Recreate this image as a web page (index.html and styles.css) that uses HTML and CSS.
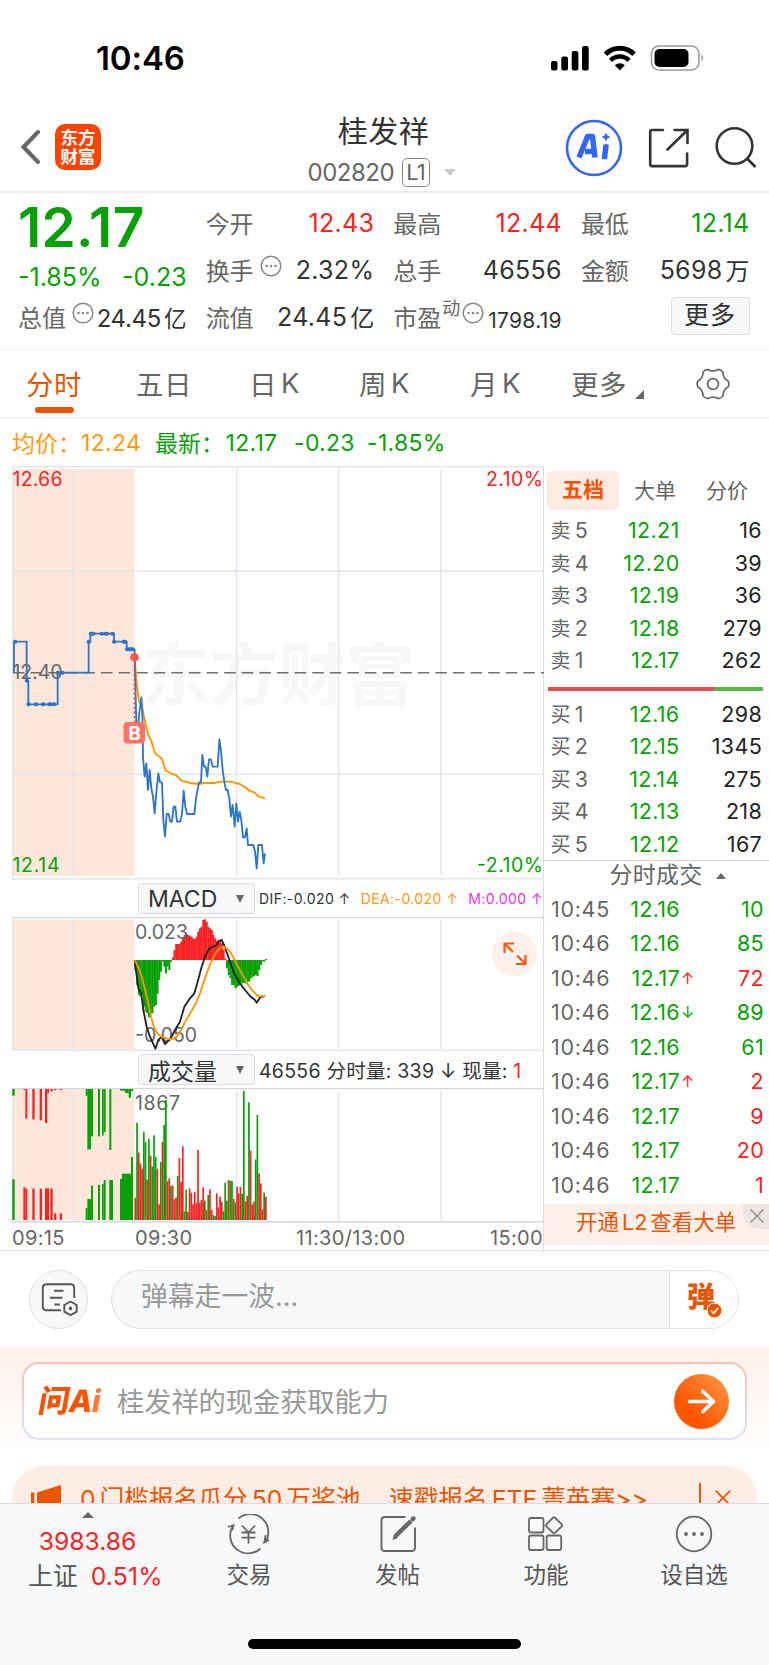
FILE: index.html
```html
<!DOCTYPE html>
<html lang="zh-CN">
<head>
<meta charset="utf-8">
<title>桂发祥 002820</title>
<link rel="stylesheet" href="styles.css">
</head>
<body>
<div class="screen">
  <div class="status">
    <span class="clock">10:46</span>
    <svg class="status-icons" width="156" height="28" viewBox="550 43 156 28">
      <rect x="551" y="60" width="6.5" height="9.5" rx="2"/><rect x="561.300" y="55.500" width="6.700" height="14" rx="2"/><rect x="571.700" y="50" width="6.700" height="19.500" rx="2"/><rect x="582" y="45" width="6.700" height="24.500" rx="2"/>
      <path d="M605.500 53.200a20 20 0 0 1 28.500 0" fill="none" stroke="#000" stroke-width="5"/>
      <path d="M610.500 59.400a13 13 0 0 1 18.500 0" fill="none" stroke="#000" stroke-width="4.500"/>
      <path d="M614.800 64.200a7.500 7.500 0 0 1 10 0l-5 5.200z"/>
      <rect x="651.500" y="45" width="47.500" height="24" rx="7.500" fill="none" stroke="#999" stroke-width="1.500"/>
      <rect x="654.500" y="48" width="34" height="18" rx="5"/><path d="M701.500 53.500a4.500 4.500 0 0 1 0 7z" fill="#999"/>
    </svg>
  </div>

  <header class="header">
    <div class="head-left">
      <svg width="20" height="36" viewBox="0 0 20 36"><path d="M18 3 3.500 18 18 33" fill="none" stroke="#666" stroke-width="4" stroke-linecap="round" stroke-linejoin="miter"/></svg>
      <div class="logo"><span>东方</span><span>财富</span></div>
    </div>
    <div class="head-title">
      <h1>桂发祥</h1>
      <div class="code"><span>002820</span><b>L1</b><i></i></div>
    </div>
    <svg class="head-icons" width="205" height="60" viewBox="564 118 205 60" fill="none" stroke="#333" stroke-width="2.600">
      <circle cx="594" cy="148" r="27" stroke="#36f" stroke-width="2.600"/>
      <path d="M579 157.500l8.500-21h5l2.500 21M585 151.500h8" stroke="#36f" stroke-width="5.500" stroke-linejoin="round"/>
      <path d="M604.500 145.500h3l-1.500 12.500h-3z" fill="#36f" stroke="#36f" stroke-width="2.500" stroke-linejoin="round"/>
      <path d="M606 133.500l1.200 2.300 2.300 1.200-2.300 1.200-1.200 2.300-1.200-2.300-2.300-1.200 2.300-1.200z" fill="#36f" stroke="#36f" stroke-width="1"/>
      <path d="M663 130h-11q-1.800 0-1.800 1.800v32.500q0 1.800 1.800 1.800h33.300q1.800 0 1.800-1.800V153.500M674.500 130h13v13M687 130.500L667.500 149.500" stroke-linecap="round"/>
      <circle cx="734.500" cy="146" r="17.800"/><path d="M747.500 159l8 8"/>
    </svg>
  </header>

  <section class="quote">
    <div class="qcol first">
      <div class="price">12.17</div>
      <div class="change"><span>-1.85%</span><span>-0.23</span></div>
      <div class="cell low"><label>总值</label><svg class="dots" viewBox="0 0 22 22"><use href="#more-dots"/></svg><span class="v sm">24.45<u>亿</u></span></div>
    </div>
    <div class="qcol">
      <div class="cell"><label>今开</label><span class="v red">12.43</span></div>
      <div class="cell"><label>换手</label><svg class="dots" viewBox="0 0 22 22"><use href="#more-dots"/></svg><span class="v">2.32%</span></div>
      <div class="cell"><label>流值</label><span class="v">24.45<u>亿</u></span></div>
    </div>
    <div class="qcol">
      <div class="cell"><label>最高</label><span class="v red">12.44</span></div>
      <div class="cell"><label>总手</label><span class="v">46556</span></div>
      <div class="cell"><label>市盈</label><sup>动</sup><svg class="dots tight" viewBox="0 0 22 22"><use href="#more-dots"/></svg><span class="v xs">1798.19</span></div>
    </div>
    <div class="qcol">
      <div class="cell"><label>最低</label><span class="v green">12.14</span></div>
      <div class="cell"><label>金额</label><span class="v">5698<u>万</u></span></div>
      <div class="cell"><button class="more">更多</button></div>
    </div>
  </section>

  <nav class="tabs">
    <span class="tab on">分时</span><span class="tab">五日</span><span class="tab">日<u>K</u></span><span class="tab">周<u>K</u></span><span class="tab">月<u>K</u></span><span class="tab">更多<i></i></span>
    <span class="tab gear"><svg width="34" height="34" viewBox="-17 -17 34 34" fill="none" stroke="#666" stroke-width="1.700"><path d="M15.260 2.690Q9.960 5.750 9.960 11.870Q8.250 14.300 5.300 14.570Q0 11.500-5.300 14.570Q-8.250 14.300-9.960 11.870Q-9.960 5.750-15.260 2.690Q-16.500 0-15.260-2.690Q-9.960-5.750-9.960-11.870Q-8.250-14.300-5.300-14.570Q0-11.500 5.300-14.570Q8.250-14.300 9.960-11.870Q9.960-5.750 15.260-2.690Q16.500 0 15.260 2.690Z"/><circle r="5.400"/></svg></span>
  </nav>

  <div class="summary">
    <span class="orange a">均价：</span><span class="orange b">12.24</span><span class="green c">最新：</span><span class="green d">12.17</span><span class="green e">-0.23</span><span class="green f">-1.85%</span>
  </div>

  <main class="market">
    <div class="charts">
      <svg class="chart" width="532" height="414" viewBox="12 466 532 414">
        <rect x="12.500" y="469" width="122" height="407" fill="#fde7db"/>
        <text class="watermark" x="142" y="700" textLength="272">东方财富</text>
        <g stroke="#e2e6ed" stroke-width="1.500" fill="none">
          <path d="M12 466.700H544M12.700 466V880M12 571H544M12 774.300H544M12 878.700H544"/>
          <path d="M73 469V876M236.600 469V876M338.700 469V876M441 469V876"/>
        </g>
        <path d="M12 672.700H544" stroke="#707070" stroke-width="1.600" stroke-dasharray="11.500 6.100" stroke-dashoffset="-1"/>
        <text class="lab red" x="12.500" y="486" textLength="50">12.66</text>
        <text class="lab red end" x="543" y="486" textLength="57">2.10%</text>
        <text class="lab green" x="12.500" y="872" textLength="47">12.14</text>
        <text class="lab green end" x="543" y="872" textLength="66">-2.10%</text>
        <text class="lab gray" x="12.500" y="679" textLength="50">12.40</text>
        <g transform="translate(0 460) scale(.33333)" fill="none" stroke-width="5.500" stroke-linejoin="round">
          <path stroke="#ff9500" d="M404 590L410 670 417 725 425 735 434 780 445 825 455 845 465 880 475 887 486 897 496 930 512 940 527 945 545 962 570 969 597 972 612 969 640 969 665 965 690 965 720 972 735 982 748 992 765 998 775 1010 795 1014"/>
          <path stroke="#2e75c5" d="M42 638V545H80V662H85V733H173V638H266V545H271V521H342V545H380V568H404V590L409 790 414 800 419 750 424 712 427 760 429 890 434 950 439 910 444 990 449 930 454 985 459 1010 464 1060 470 985 475 940 480 967 486 967 490 1080 495 1130 500 1062 506 1062 511 1085 516 1085 521 1040 526 1040 531 1085 541 1085 546 1062 551 992 556 1040 561 1062 583 1062 588 1015 597 967 603 967 607 885 612 920 617 920 622 950 627 898 633 898 638 920 653 920 658 838 663 875 668 930 673 965 678 990 683 990 688 1015 693 1070 698 1035 704 1100 709 1030 714 1085 719 1055 724 1080 729 1132 735 1132 740 1105 744 1155 760 1155 765 1175 770 1225 775 1155 786 1155 791 1210 795 1180"/>
          <path stroke="#2e75c5" stroke-width="12" stroke-linecap="round" d="M45 545h1M80 662h1M85 733h1M107 733h1M129 733h1M147 733h5M162 733h1M173 638h1M187 638h1M266 545h1M272 521h9M305 521h1M317 521h4M337 521h1M342 545h1M371 545h5M381 568h17"/>
          <path stroke="#f24a3d" stroke-dasharray="7 7" d="M404 600V790"/>
        </g>
        <circle cx="134.500" cy="657.300" r="4.300" fill="#f4574a"/>
        <rect x="123.500" y="722" width="21.500" height="21.500" rx="4" fill="#fd7465"/>
        <text class="flag" x="134.500" y="740">B</text>
      </svg>

      <div class="indicator">
        <button class="select">MACD<i></i></button>
        <span class="macd-values"><span>DIF:-0.020 ↑</span><span class="orange">DEA:-0.020 ↑</span><span class="magenta">M:0.000 ↑</span></span>
      </div>

      <svg class="chart" width="532" height="134" viewBox="12 917 532 134">
        <rect x="12.500" y="919.500" width="122" height="129.500" fill="#fde7db"/>
        <g stroke="#e2e6ed" stroke-width="1.500"><path d="M12.700 917V1050M73 919.500V1049M236.600 919.500V1049M338.700 919.500V1049M441 919.500V1049M12 1050.300H544"/><path stroke="#d5d8e0" d="M12 917.600H544"/></g>
        <g id="histogram" transform="translate(0 870) scale(.33333)"></g>
        <text class="lab gray" x="135" y="939" textLength="53">0.023</text>
        <text class="lab gray" x="135" y="1042" textLength="62">-0.050</text>
        <g transform="translate(0 870) scale(.33333)" fill="none" stroke-width="5.500" stroke-linejoin="round">
          <path stroke="#222" d="M404 272L409 310 415 355 424 370 430 420 440 470 450 500 466 536 475 510 485 500 495 522 512 505 525 480 540 455 553 410 570 385 583 370 593 335 605 290 615 260 628 235 650 225 657 212 665 210 672 225 685 260 695 290 705 315 720 340 735 360 750 378 765 390 770 398 780 383 795 378"/>
          <path stroke="#ff9500" d="M404 272C420 290 435 355 445 400S460 490 485 500 500 507 515 507 535 492 545 478C560 440 585 415 600 370S625 290 640 262 665 225 680 235 700 265 725 310 755 362 775 378L795 380"/>
        </g>
        <circle cx="514.500" cy="954" r="22.500" fill="#fef0ea"/>
        <path d="M504.500 953v-9.500h9.500M505 944l8 8M525.500 955v9h-9.500M525 963.500l-8-8" fill="none" stroke="#f05a14" stroke-width="2.200"/>
      </svg>

      <div class="indicator">
        <button class="select">成交量<i></i></button>
        <span class="vol-values"><span>46556 分时量: 339 ↓ 现量: <em>1</em></span></span>
      </div>

      <svg class="chart" width="532" height="135" viewBox="12 1088 532 135">
        <rect x="12.500" y="1089" width="122" height="131" fill="#fde7db"/>
        <g stroke="#e2e6ed" stroke-width="1.500"><path d="M12.700 1088V1222M73 1091V1220M236.600 1091V1220M338.700 1091V1220M441 1091V1220"/><path stroke="#d5d8e0" d="M12 1088.600H544M12 1221.700H544"/></g>
        <text class="lab gray" x="135" y="1110" textLength="45">1867</text>
        <g id="volume" transform="translate(0 870) scale(.33333)"></g>
      </svg>
      <div class="axis"><span>09:15</span><span>09:30</span><span>11:30/13:00</span><span>15:00</span></div>
    </div>

    <aside class="book">
      <div class="book-tabs"><span class="on">五档</span><span>大单</span><span>分价</span></div>
      <div class="row"><label>卖<u>5</u></label><b>12.21</b><span>16</span></div>
      <div class="row"><label>卖<u>4</u></label><b>12.20</b><span>39</span></div>
      <div class="row"><label>卖<u>3</u></label><b>12.19</b><span>36</span></div>
      <div class="row"><label>卖<u>2</u></label><b>12.18</b><span>279</span></div>
      <div class="row"><label>卖<u>1</u></label><b>12.17</b><span>262</span></div>
      <div class="ratio"></div>
      <div class="row"><label>买<u>1</u></label><b>12.16</b><span>298</span></div>
      <div class="row"><label>买<u>2</u></label><b>12.15</b><span>1345</span></div>
      <div class="row"><label>买<u>3</u></label><b>12.14</b><span>275</span></div>
      <div class="row"><label>买<u>4</u></label><b>12.13</b><span>218</span></div>
      <div class="row"><label>买<u>5</u></label><b>12.12</b><span>167</span></div>
      <div class="deals-head"><span>分时成交</span><i></i></div>
      <div class="deal"><label>10:45</label><b>12.16</b><s></s><span class="green">10</span></div>
      <div class="deal"><label>10:46</label><b>12.16</b><s></s><span class="green">85</span></div>
      <div class="deal"><label>10:46</label><b>12.17</b><s class="red">↑</s><span class="red">72</span></div>
      <div class="deal"><label>10:46</label><b>12.16</b><s class="green">↓</s><span class="green">89</span></div>
      <div class="deal"><label>10:46</label><b>12.16</b><s></s><span class="green">61</span></div>
      <div class="deal"><label>10:46</label><b>12.17</b><s class="red">↑</s><span class="red">2</span></div>
      <div class="deal"><label>10:46</label><b>12.17</b><s></s><span class="red">9</span></div>
      <div class="deal"><label>10:46</label><b>12.17</b><s></s><span class="red">20</span></div>
      <div class="deal"><label>10:46</label><b>12.17</b><s></s><span class="red">1</span></div>
      <div class="l2">开通<u>L2</u>查看大单
        <div class="l2-close"><svg width="14" height="14" viewBox="0 0 14 14"><path d="M.500.500l13 13M13.500.500l-13 13" stroke="#888" stroke-width="1.300"/></svg></div>
      </div>
    </aside>
  </main>

  <section class="comment">
    <div class="round"><svg width="37" height="34" viewBox="41 1284 37 34" fill="none" stroke="#555" stroke-width="1.900"><path d="M61 1311.300H46.500q-3.700 0-3.700-3.700V1289q0-3.700 3.700-3.700H70.500q3.700 0 3.700 3.700V1299M54 1291.800h9.500M50 1298.700h12.500M54.500 1305.500h5.500"/><path d="M70.500 1302.500l6.200 3.500v6.700l-6.200 3.500-6.200-3.500V1306z"/><circle cx="70.500" cy="1309.300" r=".9" fill="#555"/></svg></div>
    <div class="input"><span>弹幕走一波...</span>
      <div class="danmu"><b>弹</b><svg width="15" height="15" viewBox="0 0 15 15"><circle cx="7.500" cy="7.500" r="7.500" fill="#ea5504" stroke="#fff" stroke-width="1"/><path d="M4 7.700l2.600 2.600L11 5" fill="none" stroke="#fff" stroke-width="1.600"/></svg></div>
    </div>
  </section>

  <section class="ask">
    <div class="ask-box">
      <span class="ask-logo">问Ai</span>
      <span class="ask-text">桂发祥的现金获取能力</span>
      <svg width="55" height="55" viewBox="0 0 55 55"><defs><linearGradient id="go" x1="1" y1="0" x2=".3" y2=".7"><stop offset="0" stop-color="#ff9a4a"/><stop offset="1" stop-color="#ff5500"/></linearGradient></defs><circle cx="27.500" cy="27.500" r="27.500" fill="url(#go)"/><path d="M15.500 27.500H39M29 17.500l10.500 10-10.500 10" fill="none" stroke="#fff" stroke-width="3.600" stroke-linecap="round" stroke-linejoin="round"/></svg>
    </div>
  </section>

  <section class="promo-wrap">
    <div class="promo">
      <svg class="horn" width="31" height="34" viewBox="31 1484 31 34" fill="#ea5504"><path d="M31 1492.500h3.400v24h-3.400zM37 1492.500l24-7.500v32H37z"/></svg>
      <span class="p1">0<u>门槛报名瓜分</u>50<u>万奖池</u></span><span class="p2">速戳报名<u>ETF</u>菁英赛&gt;&gt;</span>
      <i></i><svg class="px" width="16" height="16" viewBox="0 0 16 16"><path d="M.700.700l14.600 14.600M15.300.700L.700 15.300" stroke="#ea5504" stroke-width="1.700"/></svg>
    </div>
  </section>

  <footer class="tabbar">
    <div class="index"><i></i><span class="red n">3983.86</span><span class="s"><label>上证</label><em class="red">0.51%</em></span></div>
    <div class="item">
      <svg width="44" height="40" viewBox="228 1514 44 40" fill="none" stroke="#666" stroke-width="1.800"><path d="M239.500 1518.500A18 18 0 0 1 266 1542.500M229 1527l5.500-1.700-1.200 5M233 1527.500A18 18 0 0 0 261.500 1548.500M264 1542.500h1.500l4.500-2.500M266.500 1535l-1 8"/><path d="M243 1525.500l6.500 7 6.500-7M249.500 1532.500V1543.500M242.500 1532.500h14M242.500 1537.700h14"/></svg><span>交易</span></div>
    <div class="item">
      <svg width="40" height="40" viewBox="378 1514 40 40" fill="none" stroke="#666" stroke-width="1.900"><path d="M405.500 1517H385q-3.500 0-3.500 3.500V1547.500q0 3.500 3.500 3.500H411.500q3.500 0 3.500-3.500V1527.500"/><path d="M395.500 1536L411 1521" stroke-width="4.500"/><path d="M392.500 1540l1.500-5.500 4 3.500z" fill="#666" stroke="none"/><path d="M412.800 1519.200l.7-.7" stroke-width="4.500" stroke-linecap="round"/></svg><span>发帖</span></div>
    <div class="item">
      <svg width="40" height="40" viewBox="527 1514 40 40" fill="none" stroke="#666" stroke-width="1.800"><rect x="530" y="1518" width="14.500" height="14.500" rx="2"/><rect x="530" y="1535.500" width="14.500" height="14.500" rx="2"/><rect x="547.700" y="1535.500" width="14.500" height="14.500" rx="2"/><path d="M553.700 1518l1.300-.9 1.300.9 6.200 6 .8 1.300-.8 1.300-6.200 5.900-1.300.8-1.300-.8-6.100-5.900-.8-1.300.8-1.300z"/></svg><span>功能</span></div>
    <div class="item">
      <svg width="40" height="40" viewBox="674 1514 40 40" fill="none" stroke="#666" stroke-width="1.800"><circle cx="694" cy="1534" r="17.300"/><g fill="#666" stroke="none"><circle cx="686" cy="1534" r="1.900"/><circle cx="694" cy="1534" r="1.900"/><circle cx="702" cy="1534" r="1.900"/></g></svg><span>设自选</span></div>
    <div class="home"></div>
  </footer>
</div>
<svg class="defs" width="0" height="0"><symbol id="more-dots" viewBox="0 0 22 22"><circle cx="11" cy="11" r="9.800" fill="none" stroke="#888" stroke-width="1.500"/><g fill="#888"><circle cx="6.500" cy="11" r="1.300"/><circle cx="11" cy="11" r="1.300"/><circle cx="15.500" cy="11" r="1.300"/></g></symbol></svg>
<script src="chart.js"></script>
</body>
</html>
```

FILE: styles.css
```css
* { box-sizing: border-box; }
body { margin: 0; background: #fff; color: #333; font-family: Inter, "Noto Sans CJK SC", sans-serif; }
.screen { width: 769px; height: 1665px; overflow: hidden; display: flex; flex-direction: column; }
h1, sup, label, b, em, i, u, s { margin: 0; font-weight: 400; font-style: normal; text-decoration: none; }
button { font: inherit; color: inherit; padding: 0; background: #f7f8fa; border: 1px solid #d9dce3; border-radius: 4px; }
svg { display: block; flex: none; }
.defs { position: absolute; }
.red { color: #fa2222; fill: #fa2222; }
.green { color: #07a007; fill: #07a007; }
.orange { color: #ff9914; }
.magenta { color: #e633e6; }
.gray { fill: #666; }

.status { height: 100px; padding: 15px 63px 0 96px; display: flex; align-items: center; justify-content: space-between; flex: none; }
.clock { font-size: 33px; font-weight: 600; color: #000; letter-spacing: -.1px; }
.status-icons { margin-top: 1px; }

.header { height: 93px; flex: none; border-bottom: 2px solid #ededed; display: grid; grid-template-columns: 205px 359px 205px; }
.head-left { display: flex; align-items: center; gap: 15px; padding: 3px 0 0 20px; }
.logo { width: 46px; height: 46px; border-radius: 10px; background: #ff4400; color: #fff; display: flex; flex-direction: column; align-items: center; justify-content: center; margin-top: 1px; }
.logo span { font-size: 17.500px; line-height: 19px; font-weight: 700; }
.head-left { height: 90px; }
.head-title { display: flex; flex-direction: column; align-items: center; padding: 13px 2px 0 0; }
h1 { font-size: 30px; line-height: 37px; letter-spacing: .5px; }
.code { display: flex; align-items: center; height: 45px; margin-left: -7px; font-size: 24px; color: #666; }
.code span { letter-spacing: -.5px; width: 94px; margin-left: 3px; }
.code b { width: 28px; height: 29px; border: 1.5px solid #888; border-radius: 5px; font-size: 22px; line-height: 27px; text-align: center; letter-spacing: -1px; }
.code i { margin-left: 14px; border: 6.500px solid transparent; border-top: 7px solid #ccc; border-bottom: 0; }
.head-icons { margin-top: 18px; }

.quote { height: 156px; flex: none; padding: 6.500px 19.500px 0 18px; display: grid; grid-template-columns: repeat(4, 1fr); gap: 19px; }
.price { height: 54px; line-height: 54px; font-size: 55px; font-weight: 600; color: #07a007; letter-spacing: .3px; }
.change { height: 47px; display: flex; justify-content: space-between; align-items: center; font-size: 25px; color: #07a007; letter-spacing: 0; }
.cell { height: 47px; display: flex; align-items: center; white-space: nowrap; }
.cell.low { height: 33px; }
.cell label { font-size: 24px; color: #666; padding-bottom: 2px; }
.cell sup { font-size: 18px; color: #666; margin: -17px 0 0 1px; line-height: 1; }
.dots { width: 22px; height: 22px; margin: -9px 0 0 6px; }
.dots.tight { margin-left: 2px; }
.v { margin-left: auto; font-size: 25px; letter-spacing: .3px; display: flex; align-items: center; }
.v u { margin-left: 3px; font-size: 24px; padding-bottom: 2px; letter-spacing: 0; }
.v.sm { font-size: 24px; letter-spacing: -.3px; padding-top: 2px; }
.v.sm u { font-size: 22.500px; }
.v.xs { font-size: 21px; padding-top: 6px; }
.more { margin-left: auto; width: 79px; height: 38px; font-size: 25px; line-height: 33px; letter-spacing: 1px; margin-top: -3px; }

.tabs { height: 70px; flex: none; border-top: 1px solid #ededed; border-bottom: 2px solid #f3f3f3; display: flex; font-size: 27.500px; color: #666; align-items: center; padding-left: 26px; }
.tab { height: 100%; display: flex; align-items: center; position: relative; width: 110px; flex: none; letter-spacing: .6px; padding-bottom: 2px; }
.tab.on { color: #ea5504; }
.tab.on::after { content: ""; position: absolute; left: 9px; bottom: 4px; width: 39px; height: 6px; border-radius: 3px; background: #ea5504; }
.tab u { margin-left: 4px; }
.tab:nth-child(2) { width: 113px; }
.tab:nth-child(4) { width: 111px; }
.tab:nth-child(5) { width: 101px; }
.tab:nth-child(6) { width: 125px; }
.tab i { margin: 24px 0 0 8px; border-left: 9px solid transparent; border-bottom: 9px solid #666; }
.tab.gear { width: 34px; padding: 0; }

.summary { height: 47px; flex: none; display: flex; align-items: center; font-size: 23px; padding-left: 12px; white-space: nowrap; letter-spacing: .3px; }
.summary .a, .summary .c { letter-spacing: 0; padding-bottom: 2px; }
.summary .a { width: 69px; } .summary .b { width: 74px; } .summary .c { width: 70.500px; } .summary .d { width: 68.500px; } .summary .e { width: 73px; }

.market { height: 785px; flex: none; display: grid; grid-template-columns: 544px 225px; border-bottom: 1px solid #dfe2e9; }
.charts { padding-left: 12px; border-right: 1px solid #d9dde4; display: flex; flex-direction: column; }
.lab { font-size: 19.500px; }
.end { text-anchor: end; }
.watermark { font-size: 68px; font-weight: 700; fill: #f7f7f7; font-family: "Noto Sans CJK SC"; }
.flag { font-size: 19px; font-weight: 700; fill: #fff; text-anchor: middle; }
.indicator { height: 37px; display: flex; align-items: center; padding-left: 126px; white-space: nowrap; }
.select { width: 117px; height: 31px; display: flex; align-items: center; justify-content: space-between; padding: 0 10px 0 9px; font-size: 23px; flex: none; }
.select i { border: 4.500px solid transparent; border-top: 8px solid #666; border-bottom: 0; }
.macd-values { display: flex; gap: 10px; font-size: 14px; padding-left: 4px; letter-spacing: .42px; }
.vol-values { font-size: 19.500px; padding-left: 4px; letter-spacing: .25px; }
.vol-values em { color: #fa2222; }
.axis { height: 29px; display: grid; grid-template-columns: 123px 161px 130px 1fr; align-items: center; font-size: 20px; letter-spacing: .35px; color: #666; }
.axis span:last-child { text-align: right; }

.book { font-size: 21.500px; overflow: hidden; padding-top: 5px; letter-spacing: .3px; }
.book-tabs { display: grid; grid-template-columns: 72px 72px 72px; margin-left: 3px; height: 43px; font-size: 21px; color: #666; text-align: center; line-height: 37px; letter-spacing: 0; }
.book-tabs .on { background: #feece4; color: #ff5000; border-radius: 5px; height: 39px; font-weight: 700; }
.book-tabs span + span { line-height: 39px; }
.row { height: 32.500px; display: grid; grid-template-columns: 60px 69px 1fr; padding: 0 7px 0 6.500px; align-items: center; color: #222; }
.row label { color: #666; font-size: 20px; padding-bottom: 1px; }
.row label u { font-size: 21.500px; margin-left: 4px; }
.row b, .row span { text-align: right; }
.row b, .deal b { color: #07a007; }
.ratio { height: 4.500px; margin: 10px 6px 6.500px 4px; background: linear-gradient(135deg, #ea4b4b 0 119px, #55b843 119.500px); }
.deals-head { height: 31.700px; border-top: 1px solid #d5d8e0; display: flex; justify-content: center; align-items: center; font-size: 23px; color: #666; padding-left: 22px; }
.deals-head span { line-height: 30px; padding-bottom: 2px; }
.deals-head i { margin-left: 13px; border: 5px solid transparent; border-bottom: 6px solid #666; border-top: 0; }
.deal { height: 34.500px; display: grid; grid-template-columns: 70px 59px 30px 1fr; padding: 0 5px 0 7px; align-items: center; }
.deal label { color: #666; font-size: 21.500px; letter-spacing: .7px; }
.deal b, .deal span { text-align: right; }
.deal b { margin-left: -5px; }
.deal s { font-size: 16px; padding-left: 1px; }
.l2 { height: 41px; margin-top: 1.800px; background: #fdf0ea; color: #ea5504; font-size: 21.500px; line-height: 37px; padding-left: 32px; position: relative; white-space: nowrap; letter-spacing: 0; }
.l2 u { margin: 0 3px; }
.l2-close { position: absolute; right: 0; top: 0; width: 26px; height: 25px; background: #ece4e0; border-radius: 0 0 0 16px; display: flex; align-items: center; padding-left: 7px; }

.comment { height: 96px; flex: none; display: flex; padding: 19px 30px 0 29px; gap: 23px; }
.round { width: 59px; height: 59px; border-radius: 50%; border: 1px solid #dcdfe5; background: #f7f8fa; display: flex; justify-content: center; align-items: center; padding-left: 1px; flex: none; }
.input { flex: 1; height: 59px; border: 1px solid #dcdfe5; border-radius: 30px; background: #f7f8fa; display: flex; justify-content: space-between; overflow: hidden; font-size: 26.800px; line-height: 51px; color: #999; padding-left: 29px; }
.danmu { width: 69px; background: #fff; border-left: 1px solid #dcdfe5; position: relative; }
.danmu b { position: absolute; left: 17px; top: 1px; font-size: 28px; font-weight: 900; color: #ea5504; }
.danmu svg { position: absolute; left: 37px; top: 32px; }

.ask { height: 119px; flex: none; padding: 15px 22px 0; background: linear-gradient(#fff0eb, #fff 92%); }
.ask-box { height: 78px; border: 2px solid transparent; border-radius: 17px; background: linear-gradient(#fff, #fff) padding-box, linear-gradient(#ffbfb5, #dfe3f5) border-box; display: flex; align-items: center; padding: 0 16px 0 15px; }
.ask-logo { width: 78px; font-size: 31px; line-height: 40px; font-weight: 800; letter-spacing: -.7px; transform: skewX(-10deg); background: linear-gradient(90deg, #ff5200 60%, #ff9a66 85%); -webkit-background-clip: text; background-clip: text; color: transparent; }
.ask-text { font-size: 27.200px; color: #999; flex: 1; padding-bottom: 2px; }

.promo-wrap { height: 37px; flex: none; overflow: hidden; padding: 0 12px; }
.promo { height: 64px; border-radius: 32px; background: #fdede5; display: flex; align-items: center; color: #ea5504; font-size: 24.700px; padding-left: 19px; white-space: nowrap; }
.promo .horn { margin-top: 6px; }
.promo span { padding-bottom: 2px; }
.promo .p1 { margin-left: 18px; width: 309px; }
.promo .p1 u { margin: 0 4px; }
.promo .p2 { width: 310px; }
.promo .p2 u { margin: 0 4px; }
.promo i { width: 2px; height: 30px; background: #ea5504; }
.px { margin-left: 14px; }

.tabbar { height: 162px; flex: none; background: #f7f8fa; border-top: 1px solid #d9dce3; position: relative; display: grid; grid-template-columns: 175px 148px 149px 148px 148px; color: #555; }
.index { display: flex; flex-direction: column; align-items: center; padding-top: 8px; }
.index i { border: 6.500px solid transparent; border-bottom: 6.500px solid #666; border-top: 0; }
.index .n { font-size: 24.700px; line-height: 30px; margin-top: 8px; }
.index .s { display: flex; gap: 13px; margin: 2px 0 0 16px; font-size: 24.700px; line-height: 36px; }
.index em { letter-spacing: .2px; }
.item { display: flex; flex-direction: column; align-items: center; padding-top: 10px; font-size: 22.500px; line-height: 42px; }
.home { position: absolute; left: 248px; bottom: 16px; width: 273px; height: 10px; border-radius: 5px; background: #000; }
```

FILE: chart.js
```js
const RED = '#fa2222';
const GREEN = '#07a007';
const START = 403.5;
const STEP = 5.085;

function bar(group, x, width, top, bottom, color) {
  const rect = document.createElementNS('http://www.w3.org/2000/svg', 'rect');
  rect.setAttribute('x', x);
  rect.setAttribute('y', Math.min(top, bottom));
  rect.setAttribute('width', width);
  rect.setAttribute('height', Math.abs(bottom - top));
  rect.setAttribute('fill', color);
  group.appendChild(rect);
}

// MACD histogram: bar ends around the zero line
const ZERO = 270;
const ends = [300,345,375,380,375,410,425,430,442,430,430,410,405,372,330,305,275,290,310,290,
  300,275,262,240,222,222,222,215,205,195,190,195,197,200,205,207,200,185,175,170,150,148,155,
  170,175,180,195,205,212,218,210,220,240,265,295,315,325,345,345,355,350,347,340,340,338,340,
  335,335,325,322,318,315,318,300,285,274,275,267];
const histogram = document.getElementById('histogram');
ends.forEach((end, i) => bar(histogram, START + i * STEP, STEP + 1, end, ZERO, end < ZERO ? RED : GREEN));

// Volume per minute after the open
const BASE = 1050;
const minutes = 'R983 G758 R848 R880 R896 G785 G816 R928 G806 R857 G890 G796 G861 R897 R1003 G876 R815 G765 G690 R934 R925 G947 R947 R988 R983 G918 R864 R936 R829 G1024 G959 R1026 R955 R968 R1003 R966 R998 R840 R998 R990 R952 G992 R1020 G975 R958 R1020 G1035 G1038 R970 R1012 R980 R995 G1024 G938 G992 R930 G932 G933 R987 G997 R950 R970 R950 G971 G663 R994 R977 G697 R842 R1003 R995 G868 G734 R910 R940 R1018 G968 R980'.split(' ');
const volume = document.getElementById('volume');
minutes.forEach((m, i) => bar(volume, START + i * STEP, STEP, +m.slice(1), BASE, m[0] === 'R' ? RED : GREEN));

// Call auction: matched volume rises from the base
[[37,44,928,'G'],[70,76,952,'R'],[76,82,956,'R'],[97,104,956,'R'],[119,126,956,'R'],[135,147,955,'R'],[151,158,956,'R'],
 [162,169,1030,'R'],[179,186,1030,'R'],[257,262,1014,'G'],[262,273,987,'G'],[273,279,947,'G'],[294,300,945,'G'],
 [306,311,942,'G'],[311,317,930,'G'],[328,339,930,'G'],[360,366,927,'G'],[366,393,911,'G'],[393,399,861,'G']]
  .forEach(([a, b, top, c]) => bar(volume, a, b - a, top, BASE, c === 'R' ? RED : GREEN));

// Call auction: unmatched volume hangs from the top
[[37,44,677,'G'],[70,76,660,'R'],[76,82,746,'R'],[97,104,748,'R'],[119,126,751,'R'],[135,142,759,'R'],[142,147,670,'R'],
 [151,158,664,'R'],[162,169,660,'R'],[179,186,660,'R'],[257,262,678,'G'],[262,273,838,'G'],[273,279,799,'G'],
 [294,300,799,'G'],[306,311,797,'G'],[311,317,786,'G'],[328,334,840,'G'],[360,375,662,'G'],[375,386,669,'G'],
 [386,393,683,'G'],[393,399,663,'G']]
  .forEach(([a, b, bottom, c]) => bar(volume, a, b - a, 657, bottom, c === 'R' ? RED : GREEN));
```
